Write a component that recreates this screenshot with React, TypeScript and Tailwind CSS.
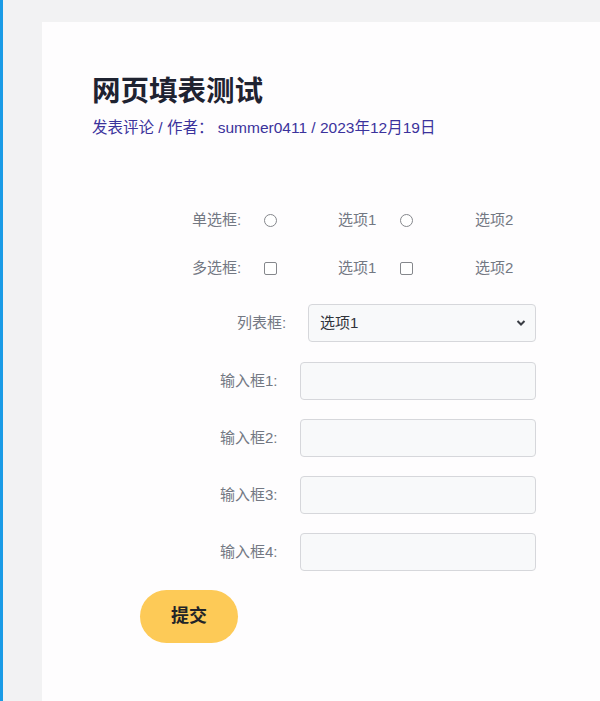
import React from 'react';

const font = { fontFamily: '"Liberation Sans", "Noto Sans CJK SC", sans-serif' };

const ChoiceRow = ({ label, type }: { label: string; type: 'radio' | 'checkbox' }) => {
  const box =
    type === 'radio'
      ? 'appearance-none w-[13px] h-[13px] rounded-full border-[1.5px] border-[#85878c] bg-white'
      : 'appearance-none w-[13px] h-[13px] rounded-[2px] border-[1.5px] border-[#85878c] bg-white';
  return (
    <div className="flex items-center h-[30px] ml-[100px] text-[15px] text-[#737883]">
      <span className="w-[72px]">{label}</span>
      <span className="w-[74px] flex items-center">
        <input type={type} name={label} className={box} />
      </span>
      <span className="w-[62px]">选项1</span>
      <span className="w-[75px] flex items-center">
        <input type={type} name={label} className={box} />
      </span>
      <span>选项2</span>
    </div>
  );
};

const InputRow = ({ label }: { label: string }) => (
  <div className="flex items-center ml-[128px]">
    <span className="w-[80px] text-[15px] text-[#737883]">{label}</span>
    <input
      type="text"
      className="w-[236px] h-[38px] rounded-[4px] border border-[#d6d7db] bg-[#f8f9fa] px-3 outline-none"
    />
  </div>
);

export default function App() {
  return (
    <div className="flex w-[600px] h-[701px] overflow-hidden bg-[#f2f2f3]" style={font}>
      <div className="w-[3px] bg-[#1a9be6] shrink-0" />
      <div className="flex-1 pl-[39px] pt-[22px]">
        <div className="h-[700px] bg-[#fefdfe] pl-[50px] pt-[51px]">
          <h1 className="text-[28.5px] leading-[36px] font-bold text-[#1f2331]">网页填表测试</h1>
          <p className="mt-[8px] text-[15.5px] leading-[22px] text-[#3b329c]">
            发表评论 / 作者： summer0411 / 2023年12月19日
          </p>

          <div className="mt-[66px] flex flex-col">
            <ChoiceRow label="单选框:" type="radio" />
            <div className="mt-[18px]">
              <ChoiceRow label="多选框:" type="checkbox" />
            </div>

            <div className="mt-[21px] flex items-center ml-[145px]">
              <span className="w-[71px] text-[15px] text-[#737883]">列表框:</span>
              <div className="relative">
                <select className="appearance-none w-[228px] h-[38px] rounded-[4px] border border-[#d6d7db] bg-[#f8f9fa] pl-[11px] text-[15px] text-[#30333a] outline-none">
                  <option>选项1</option>
                  <option>选项2</option>
                </select>
                <svg
                  className="absolute right-[10px] top-[15px] pointer-events-none"
                  width="10"
                  height="8"
                  viewBox="0 0 10 8"
                  fill="none"
                >
                  <path d="M1.5 2 L5 5.5 L8.5 2" stroke="#3a3d44" strokeWidth="2" />
                </svg>
              </div>
            </div>

            <div className="mt-[20px] flex flex-col gap-[19px]">
              <InputRow label="输入框1:" />
              <InputRow label="输入框2:" />
              <InputRow label="输入框3:" />
              <InputRow label="输入框4:" />
            </div>

            <button className="mt-[19px] ml-[48px] w-[98px] h-[53px] rounded-full bg-[#fdca57] text-[18px] font-bold text-[#222428]">
              提交
            </button>
          </div>
        </div>
      </div>
    </div>
  );
}
